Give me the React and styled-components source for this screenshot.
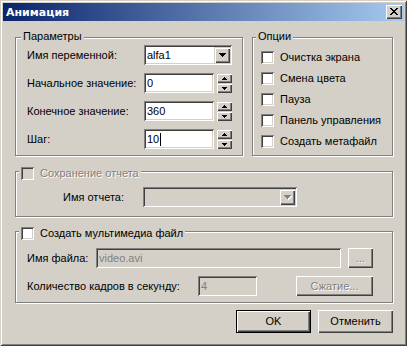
import styled, { createGlobalStyle } from "styled-components";

const face = "#d4d0c8";
const sunken = `inset 1px 1px 0 #808080, inset -1px -1px 0 #fff, inset 2px 2px 0 #404040, inset -2px -2px 0 ${face}`;
const raised = `inset 1px 1px 0 #fff, inset -1px -1px 0 #404040, inset -2px -2px 0 #808080`;

const GlobalStyle = createGlobalStyle`
  * { box-sizing: border-box; }
  body {
    margin: 0;
    background: ${face};
    font-family: "Liberation Sans", Arial, sans-serif;
    font-size: 11px;
    line-height: 13px;
    color: #000;
  }
`;

const Window = styled.div`
  width: 407px;
  height: 346px;
  padding: 3px;
  background: ${face};
  display: flex;
  flex-direction: column;
  box-shadow: inset 1px 1px 0 ${face}, inset -1px -1px 0 #404040,
    inset 2px 2px 0 #fff, inset -2px -2px 0 #808080;
`;

const TitleBar = styled.div`
  height: 18px;
  flex: none;
  display: flex;
  align-items: center;
  justify-content: space-between;
  padding: 0 2px 0 3px;
  background: linear-gradient(to right, #0a246a, #a6caf0);
`;

const TitleText = styled.span`
  color: #fff;
  font-family: "DejaVu Sans", Tahoma, sans-serif;
  font-weight: bold;
  font-size: 11px;
`;

const CloseButton = styled.div`
  width: 16px;
  height: 14px;
  background: ${face};
  box-shadow: ${raised};
  display: flex;
  align-items: center;
  justify-content: center;
  padding-bottom: 1px;
`;

const Content = styled.div`
  display: flex;
  flex-direction: column;
  padding: 16px 11px 0 12px;
`;

const TopRow = styled.div`
  display: flex;
  gap: 9px;
`;

const Group = styled.div`
  display: flex;
  flex-direction: column;
  border: 1px solid #808080;
  box-shadow: inset 1px 1px 0 #fff, 1px 1px 0 #fff;
  padding-bottom: ${(p) => p.$pb}px;
  margin-top: ${(p) => p.$mt || 0}px;
  width: ${(p) => (p.$w ? `${p.$w}px` : "auto")};
  flex: ${(p) => (p.$w ? "none" : "1")};
`;

const GroupTitle = styled.div`
  align-self: flex-start;
  display: flex;
  align-items: center;
  gap: 6px;
  height: 13px;
  margin: ${(p) => p.$top}px 0 0 ${(p) => p.$x}px;
  padding: 0 2px;
  background: ${face};
  color: ${(p) => (p.$disabled ? "#808080" : "#000")};
  text-shadow: ${(p) => (p.$disabled ? "1px 1px 0 #fff" : "none")};
`;

const Body = styled.div`
  display: flex;
  flex-direction: column;
  gap: ${(p) => p.$gap || 0}px;
  margin-top: ${(p) => p.$mt}px;
  padding: 0 ${(p) => p.$pr || 0}px 0 ${(p) => p.$pl}px;
`;

const ParamRow = styled.div`
  display: grid;
  grid-template-columns: 117px 88px;
  align-items: center;
  height: 20px;
`;

const CheckRow = styled.label`
  display: flex;
  align-items: center;
  gap: 6px;
  height: 21px;
`;

const Box = styled.span`
  width: 13px;
  height: 13px;
  flex: none;
  background: ${(p) => (p.$disabled ? face : "#fff")};
  box-shadow: ${sunken};
`;

const Field = styled.div`
  height: 20px;
  width: ${(p) => (p.$w ? `${p.$w}px` : "auto")};
  flex: ${(p) => (p.$w ? "none" : "1")};
  display: flex;
  align-items: center;
  padding: 0 2px 0 3px;
  background: ${(p) => (p.$disabled ? face : "#fff")};
  color: ${(p) => (p.$disabled ? "#808080" : "#000")};
  box-shadow: ${sunken};
`;

const Caret = styled.span`
  width: 1px;
  height: 13px;
  background: #000;
  margin-left: 1px;
`;

const DropButton = styled.div`
  width: 16px;
  height: 16px;
  margin-left: auto;
  background: ${face};
  box-shadow: inset 1px 1px 0 ${face}, inset 2px 2px 0 #fff,
    inset -1px -1px 0 #404040, inset -2px -2px 0 #808080;
  display: flex;
  align-items: center;
  justify-content: center;
  & svg {
    fill: ${(p) => (p.$disabled ? "#808080" : "#000")};
    filter: ${(p) => (p.$disabled ? "drop-shadow(1px 1px 0 #fff)" : "none")};
  }
`;

const SpinBox = styled.div`
  display: flex;
  gap: 2px;
`;

const Spin = styled.div`
  width: 16px;
  height: 20px;
  display: flex;
  flex-direction: column;
`;

const SpinHalf = styled.div`
  flex: 1;
  background: ${face};
  box-shadow: inset 1px 1px 0 ${face}, inset 2px 2px 0 #fff,
    inset -1px -1px 0 #404040, inset -2px -2px 0 #808080;
  display: flex;
  align-items: center;
  justify-content: center;
`;

const FormRow = styled.div`
  display: flex;
  align-items: center;
  gap: ${(p) => p.$gap || 0}px;
  height: 20px;
`;

const Label = styled.span`
  width: ${(p) => p.$w}px;
  flex: none;
  white-space: nowrap;
`;

const Button = styled.button`
  width: ${(p) => p.$w}px;
  height: ${(p) => p.$h || 23}px;
  margin-left: ${(p) => (p.$push ? "auto" : "0")};
  padding: 0;
  font: inherit;
  background: ${face};
  border: ${(p) => (p.$default ? "1px solid #000" : "none")};
  box-shadow: ${raised};
  color: ${(p) => (p.$disabled ? "#808080" : "#000")};
  text-shadow: ${(p) => (p.$disabled ? "1px 1px 0 #fff" : "none")};
`;

const ButtonRow = styled.div`
  display: flex;
  justify-content: flex-end;
  gap: 7px;
  margin-top: 7px;
`;

const Arrow = ({ dir }) => {
  if (dir === "up")
    return (
      <svg width="5" height="3" viewBox="0 0 5 3">
        <path d="M2 0h1v1h1v1h1v1H0V2h1V1h1z" />
      </svg>
    );
  if (dir === "down")
    return (
      <svg width="5" height="3" viewBox="0 0 5 3">
        <path d="M0 0h5v1H4v1H3v1H2V2H1V1H0z" />
      </svg>
    );
  return (
    <svg width="7" height="4" viewBox="0 0 7 4">
      <path d="M0 0h7v1H6v1H5v1H4v1H3V3H2V2H1V1H0z" />
    </svg>
  );
};

const CloseIcon = () => (
  <svg width="8" height="7" viewBox="0 0 8 7">
    <path d="M0 0h2v1h1v1h2V1h1V0h2v1H7v1H6v1H5v1h1v1h1v1h1v1H6V6H5V5H3v1H2v1H0V6h1V5h1V4h1V3H2V2H1V1H0z" />
  </svg>
);

const Spinner = ({ value, caret }) => (
  <SpinBox>
    <Field $w={70}>
      {value}
      {caret && <Caret />}
    </Field>
    <Spin>
      <SpinHalf>
        <Arrow dir="up" />
      </SpinHalf>
      <SpinHalf>
        <Arrow dir="down" />
      </SpinHalf>
    </Spin>
  </SpinBox>
);

const options = [
  "Очистка экрана",
  "Смена цвета",
  "Пауза",
  "Панель управления",
  "Создать метафайл",
];

export default function App() {
  return (
    <>
      <GlobalStyle />
      <Window>
        <TitleBar>
          <TitleText>Анимация</TitleText>
          <CloseButton>
            <CloseIcon />
          </CloseButton>
        </TitleBar>
        <Content>
          <TopRow>
            <Group $w={228} $pb={6}>
              <GroupTitle $top={-8} $x={5}>
                Параметры
              </GroupTitle>
              <Body $mt={2} $gap={8} $pl={11} $pr={10}>
                <ParamRow>
                  <span>Имя переменной:</span>
                  <Field>
                    alfa1
                    <DropButton>
                      <Arrow />
                    </DropButton>
                  </Field>
                </ParamRow>
                <ParamRow>
                  <span>Начальное значение:</span>
                  <Spinner value="0" />
                </ParamRow>
                <ParamRow>
                  <span>Конечное значение:</span>
                  <Spinner value="360" />
                </ParamRow>
                <ParamRow>
                  <span>Шаг:</span>
                  <Spinner value="10" caret />
                </ParamRow>
              </Body>
            </Group>
            <Group $pb={2}>
              <GroupTitle $top={-8} $x={3}>
                Опции
              </GroupTitle>
              <Body $mt={4} $pl={8}>
                {options.map((o) => (
                  <CheckRow key={o}>
                    <Box />
                    {o}
                  </CheckRow>
                ))}
              </Body>
            </Group>
          </TopRow>

          <Group $mt={15} $pb={9}>
            <GroupTitle $top={-5} $x={3} $disabled>
              <Box $disabled />
              Сохранение отчета
            </GroupTitle>
            <Body $mt={7} $pl={47}>
              <FormRow>
                <Label $w={80}>Имя отчета:</Label>
                <Field $w={154} $disabled>
                  <DropButton $disabled>
                    <Arrow />
                  </DropButton>
                </Field>
              </FormRow>
            </Body>
          </Group>

          <Group $mt={14} $pb={6}>
            <GroupTitle $top={-5} $x={3}>
              <Box />
              Создать мультимедиа файл
            </GroupTitle>
            <Body $mt={8} $gap={8} $pl={11} $pr={19}>
              <FormRow $gap={7}>
                <Label $w={62}>Имя файла:</Label>
                <Field $disabled>video.avi</Field>
                <Button $w={25} $h={20} $disabled>
                  ...
                </Button>
              </FormRow>
              <FormRow>
                <Label $w={171}>Количество кадров в секунду:</Label>
                <Field $w={59} $disabled>
                  4
                </Field>
                <Button $w={77} $h={20} $push $disabled>
                  Сжатие...
                </Button>
              </FormRow>
            </Body>
          </Group>

          <ButtonRow>
            <Button $w={75} $default>
              OK
            </Button>
            <Button $w={75}>Отменить</Button>
          </ButtonRow>
        </Content>
      </Window>
    </>
  );
}
